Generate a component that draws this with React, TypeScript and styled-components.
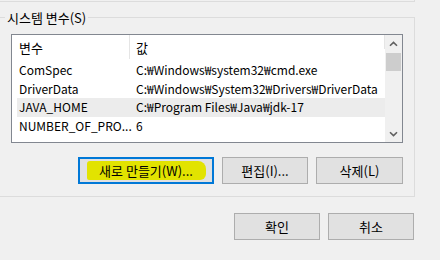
import styled, { createGlobalStyle } from 'styled-components';

const GlobalStyle = createGlobalStyle`
  html, body {
    margin: 0;
    padding: 0;
    background: #f0f0f0;
  }
  body {
    font-family: 'Noto Sans CJK KR', 'Noto Sans', sans-serif;
    font-size: 12px;
    color: #000;
  }
`;

const variables = [
  { name: 'ComSpec', value: 'C:₩Windows₩system32₩cmd.exe' },
  { name: 'DriverData', value: 'C:₩Windows₩System32₩Drivers₩DriverData' },
  { name: 'JAVA_HOME', value: 'C:₩Program Files₩Java₩jdk-17', selected: true },
  { name: 'NUMBER_OF_PRO...', value: '6' },
];

function Chevron({ down }: { down?: boolean }) {
  return (
    <svg width="9" height="6" viewBox="0 0 9 6">
      <path
        d={down ? 'M1 1.2 L4.5 4.6 L8 1.2' : 'M1 4.8 L4.5 1.4 L8 4.8'}
        fill="none"
        stroke="#606060"
        strokeWidth="1.6"
      />
    </svg>
  );
}

function App() {
  return (
    <Window>
      <GlobalStyle />
      <TopEdge />
      <GroupBox>
        <Legend>시스템 변수(S)</Legend>
        <ListView>
          <Table>
            <HeaderRow>
              <NameHead>변수</NameHead>
              <ValueHead>값</ValueHead>
            </HeaderRow>
            <Body>
              {variables.map((v) => (
                <Row key={v.name} selected={v.selected}>
                  <NameCell>{v.name}</NameCell>
                  <ValueCell>{v.value}</ValueCell>
                </Row>
              ))}
            </Body>
          </Table>
          <ScrollBar>
            <ArrowButton><Chevron /></ArrowButton>
            <Thumb />
            <Track />
            <ArrowButton><Chevron down /></ArrowButton>
          </ScrollBar>
        </ListView>
        <ButtonRow>
          <Button width={136} focused>
            <Marker>새로 만들기(W)...</Marker>
          </Button>
          <Button width={86}>편집(I)...</Button>
          <Button width={87}>삭제(L)</Button>
        </ButtonRow>
      </GroupBox>
      <Footer>
        <Button width={86}>확인</Button>
        <Button width={86}>취소</Button>
      </Footer>
    </Window>
  );
}

export default App;

const Window = styled.div`
  width: 440px;
  height: 260px;
  overflow: hidden;
  display: flex;
  flex-direction: column;
  background: #f0f0f0;
`;

const TopEdge = styled.div`
  box-sizing: border-box;
  width: 415px;
  height: 2px;
  border-right: 1px solid #dcdcdc;
  border-bottom: 1px solid #dcdcdc;
`;

const GroupBox = styled.div`
  position: relative;
  box-sizing: border-box;
  width: 415px;
  margin-top: 15px;
  padding: 16px 11px 12px 11px;
  border: 1px solid #dcdcdc;
  border-left: none;
  display: flex;
  flex-direction: column;
`;

const Legend = styled.span`
  position: absolute;
  top: -10px;
  left: 5px;
  padding: 0 2px;
  font-size: 13px;
  line-height: 19px;
  background: #f0f0f0;
`;

const ListView = styled.div`
  box-sizing: border-box;
  height: 109px;
  border: 1px solid #828790;
  background: #fff;
  display: flex;
`;

const Table = styled.div`
  flex: 1;
  display: flex;
  flex-direction: column;
  overflow: hidden;
`;

const HeaderRow = styled.div`
  display: flex;
  height: 24px;
  margin-left: 5px;
  font-size: 13px;
  line-height: 25px;
`;

const NameHead = styled.div`
  box-sizing: border-box;
  width: 113px;
  padding-left: 2px;
  border-right: 1px solid #e5e5e5;
`;

const ValueHead = styled.div`
  flex: 1;
  padding-left: 6px;
  border-right: 1px solid #e5e5e5;
  height: 14px;
  overflow: visible;
`;

const Body = styled.div`
  padding-top: 2px;
  display: flex;
  flex-direction: column;
`;

const Row = styled.div<{ selected?: boolean }>`
  display: flex;
  height: 18.5px;
  line-height: 18px;
  margin-left: 5px;
  white-space: nowrap;
  background: ${({ selected }) => (selected ? '#ececec' : 'transparent')};
`;

const NameCell = styled.div`
  box-sizing: border-box;
  width: 113px;
  padding-left: 2px;
`;

const ValueCell = styled.div`
  flex: 1;
  padding-left: 6px;
`;

const ScrollBar = styled.div`
  width: 17px;
  background: #f0f0f0;
  display: flex;
  flex-direction: column;
`;

const ArrowButton = styled.div`
  height: 17px;
  display: flex;
  align-items: center;
  justify-content: center;
`;

const Thumb = styled.div`
  height: 18px;
  margin: 1px 1px 0 1px;
  background: #cdcdcd;
`;

const Track = styled.div`
  flex: 1;
`;

const ButtonRow = styled.div`
  display: flex;
  justify-content: flex-end;
  gap: 8px;
  margin-top: 14px;
`;

const Button = styled.div<{ width: number; focused?: boolean }>`
  box-sizing: border-box;
  width: ${({ width }) => width}px;
  height: 27px;
  border: ${({ focused }) => (focused ? '2px solid #0078d7' : '1px solid #adadad')};
  background: #e1e1e1;
  font-size: 13px;
  display: flex;
  align-items: center;
  justify-content: center;
  white-space: nowrap;
`;

const Marker = styled.span`
  display: inline-block;
  width: 119px;
  height: 19px;
  line-height: 19px;
  text-align: center;
  background: #e2e300;
  border-radius: 3px 8px 6px 2px;
`;

const Footer = styled.div`
  display: flex;
  justify-content: flex-end;
  gap: 8px;
  margin-top: 16px;
  padding-right: 26px;
`;
